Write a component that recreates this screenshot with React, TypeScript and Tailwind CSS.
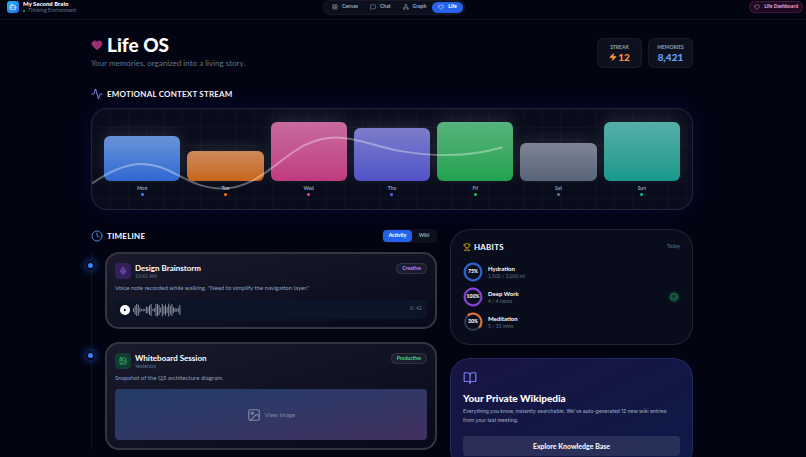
import React from 'react';
import {
  Activity, BookOpen, Bot, Clock, Heart, Image as ImageIcon, LayoutGrid, MessageSquare, Mic, Network, Smile, Trophy, Zap,
} from 'lucide-react';

const NAV = [
  { label: 'Canvas', icon: LayoutGrid },
  { label: 'Chat', icon: MessageSquare },
  { label: 'Graph', icon: Network },
  { label: 'Life', icon: Heart, active: true },
];

const DAYS = [
  { day: 'Mon', height: 'h-[45px]', bar: 'from-[#6a93d8] to-[#3068d2]', dot: 'bg-[#3b82f6]' },
  { day: 'Tue', height: 'h-[30px]', bar: 'from-[#cd8a58] to-[#c7641a]', dot: 'bg-[#f97316]' },
  { day: 'Wed', height: 'h-[59px]', bar: 'from-[#c66b9f] to-[#c03b80]', dot: 'bg-[#ec4899]' },
  { day: 'Thu', height: 'h-[53px]', bar: 'from-[#7c7dca] to-[#5152c8]', dot: 'bg-[#6366f1]' },
  { day: 'Fri', height: 'h-[59px]', bar: 'from-[#56b37c] to-[#20a24f]', dot: 'bg-[#22c55e]' },
  { day: 'Sat', height: 'h-[38px]', bar: 'from-[#7e8494] to-[#576478]', dot: 'bg-[#64748b]' },
  { day: 'Sun', height: 'h-[59px]', bar: 'from-[#54aea6] to-[#14998c]', dot: 'bg-[#14b8a6]' },
];

const HABITS = [
  { name: 'Hydration', detail: '1,500 / 2,000 ml', percent: 75, arc: 100, color: '#2b63d9' },
  { name: 'Deep Work', detail: '4 / 4 hours', percent: 100, arc: 100, color: '#8b3fdc', done: true },
  { name: 'Meditation', detail: '5 / 15 mins', percent: 30, arc: 48, color: '#e8742a' },
];

const WAVE = [4, 9, 12, 11, 5, 2, 3, 2, 7, 6, 10, 12, 2, 4, 12, 13, 10, 5, 13, 8, 11, 6, 13, 9, 12, 6, 4, 3, 5, 10];

const Header: React.FC = () => (
  <header className="flex h-5 shrink-0 items-center border-b border-white/5 pb-[5px] pl-[7px] pr-[3px]">
    <div className="flex flex-1 items-center gap-1">
      <div className="flex size-3 items-center justify-center rounded-[3px] bg-gradient-to-br from-[#22b8ee] to-[#2563eb] text-white">
        <Bot className="size-2" />
      </div>
      <div>
        <p className="text-[6px] font-black leading-[7px]">My Second Brain</p>
        <p className="flex items-center gap-[3px] text-[5px] leading-[7px] text-slate-500">
          <span className="size-0.5 rounded-full bg-green-500" />
          Thinking Environment
        </p>
      </div>
    </div>

    <nav className="flex h-[15px] w-[142px] items-center justify-between rounded-full border border-white/5 bg-[#0c0f1c] px-0.5">
      {NAV.map(({ label, icon: Icon, active }) => (
        <button
          key={label}
          type="button"
          className={
            active
              ? 'flex h-[11px] items-center gap-1 rounded-full bg-[#2563eb] px-1.5 text-[5px] font-black text-white'
              : 'flex h-[11px] items-center gap-1 rounded-full px-1.5 text-[5px] font-black text-slate-400'
          }
        >
          <Icon className="size-1.5" />
          {label}
        </button>
      ))}
    </nav>

    <div className="flex flex-1 justify-end pl-[22px]">
      <button type="button" className="flex h-3 items-center gap-1 rounded-full border border-[#ec4899]/20 bg-[#1f0a22] px-1 text-[5px] font-black text-[#e29ac0]">
        <Heart className="size-1.5" />
        Life Dashboard
      </button>
    </div>
  </header>
);

const Stat: React.FC<{ label: string; children: React.ReactNode }> = ({ label, children }) => (
  <div className="flex h-[30px] w-[45px] flex-col items-center justify-center gap-px rounded-md border border-white/5 bg-[#0d101d]">
    <p className="text-[5px] font-bold leading-[6px] text-slate-400">{label}</p>
    {children}
  </div>
);

const Stream: React.FC = () => (
  <section className="mt-5">
    <h2 className="flex h-3 items-center gap-1 text-[8px] font-bold uppercase tracking-wide">
      <Activity className="size-3 text-[#818cf8]" />
      Emotional Context Stream
    </h2>
    <div className="relative mt-2 flex h-[102px] items-end gap-[7px] overflow-hidden rounded-[16px] border border-white/10 bg-[#080c1b] bg-[linear-gradient(to_right,rgba(255,255,255,0.025)_1px,transparent_1px),linear-gradient(to_bottom,rgba(255,255,255,0.025)_1px,transparent_1px)] bg-[size:18px_18px] px-3 pb-[13px] shadow-[0_0_26px_rgba(20,24,110,0.35)]">
      {DAYS.map(({ day, height, bar, dot }) => (
        <div key={day} className="flex flex-1 flex-col items-center">
          <div className={`w-full rounded-md bg-gradient-to-b shadow-[0_-5px_16px_rgba(255,255,255,0.1)] ${height} ${bar}`} />
          <p className="mt-1 text-[5px] font-bold leading-[6px] text-slate-400">{day}</p>
          <span className={`mt-0.5 size-[3px] rounded-full ${dot}`} />
        </div>
      ))}
      <svg className="pointer-events-none absolute inset-0 size-full" viewBox="0 0 602 102" preserveAspectRatio="none" fill="none">
        <path
          d="M0 76C18 63 34 56 50 56C80 56 95 81 130 81C178 81 196 29 245 29C275 29 295 47 356 47C376 47 395 44 412 39"
          stroke="white"
          strokeOpacity="0.35"
          strokeWidth="2"
        />
      </svg>
    </div>
  </section>
);

type EntryProps = {
  title: string;
  time: string;
  text: string;
  tag: string;
  tagColor: string;
  icon: React.ReactNode;
  children: React.ReactNode;
};

const Entry: React.FC<EntryProps> = ({ title, time, text, tag, tagColor, icon, children }) => (
  <article className="relative rounded-[14px] border-2 border-[#343541] bg-gradient-to-br from-[#1a1a2b] to-[#080a1a] px-2 pb-2 pt-[9px]">
    <span className="absolute -left-[21px] top-[7px] size-[9px] rounded-full border-2 border-[#050b20] bg-[#3b82f6] shadow-[0_0_6px_2px_rgba(37,99,235,0.45)]" />
    <div className="flex items-start justify-between">
      <div className="flex items-center gap-1">
        {icon}
        <div>
          <h3 className="text-[8px] font-bold leading-[10px]">{title}</h3>
          <p className="text-[5px] leading-[6px] text-slate-500">{time}</p>
        </div>
      </div>
      <span className={`rounded-full border border-white/10 bg-white/5 px-[5px] text-[5px] font-bold leading-[9px] ${tagColor}`}>{tag}</span>
    </div>
    <p className="mt-[5px] text-[6px] leading-2 text-slate-400">{text}</p>
    {children}
  </article>
);

const Timeline: React.FC = () => (
  <section>
    <div className="flex h-[14px] items-center justify-between">
      <h2 className="flex items-center gap-1 text-[8px] font-bold uppercase tracking-wide">
        <Clock className="size-3 text-[#4f86d8]" />
        Timeline
      </h2>
      <div className="flex rounded-sm bg-[#0d101d] p-px">
        <button type="button" className="h-3 w-[29px] rounded-sm bg-[#2563eb] text-[5px] font-black">Activity</button>
        <button type="button" className="h-3 w-6 text-[5px] font-black text-slate-400">Wiki</button>
      </div>
    </div>

    <div className="mt-[9px] flex flex-col gap-[13px] border-l border-white/5 pl-[13px]">
      <Entry
        title="Design Brainstorm"
        time="10:42 AM"
        text={'Voice note recorded while walking. "Need to simplify the navigation layer."'}
        tag="Creative"
        tagColor="text-[#c084fc]"
        icon={
          <div className="flex size-4 items-center justify-center rounded bg-[#33205a] text-[#a868e8]">
            <Mic className="size-2" />
          </div>
        }
      >
        <div className="mt-2 flex h-[19px] items-center gap-[3px] rounded bg-[#0c1527] px-[5px]">
          <button type="button" aria-label="Play" className="flex size-[10px] items-center justify-center rounded-full bg-white">
            <svg className="size-1" viewBox="0 0 4 4"><path d="M1 .4L3.4 2L1 3.6Z" fill="#0c1527" /></svg>
          </button>
          <svg className="h-[14px] w-12" viewBox="0 0 48 14">
            {WAVE.map((h, i) => (
              <rect key={i} x={i * 1.6} y={7 - h / 2} width="1" height={h} rx="0.5" fill="#8b909e" />
            ))}
          </svg>
          <span className="ml-auto font-['Liberation_Mono',monospace] text-[5px] text-slate-500">0:42</span>
        </div>
      </Entry>

      <Entry
        title="Whiteboard Session"
        time="Yesterday"
        text="Snapshot of the Q3 architecture diagram."
        tag="Productive"
        tagColor="text-[#4ade80]"
        icon={
          <div className="flex size-4 items-center justify-center rounded bg-[#123d33] text-[#3fcf78]">
            <ImageIcon className="size-2" />
          </div>
        }
      >
        <button type="button" className="mt-[7px] flex h-[51px] w-full items-center justify-center gap-1 rounded bg-gradient-to-br from-[#233b67] via-[#303866] to-[#412f5f] text-[6px] text-[#7f88a3]">
          <ImageIcon className="size-[14px]" />
          View Image
        </button>
      </Entry>
    </div>
  </section>
);

const Habits: React.FC = () => (
  <section className="rounded-[20px] border border-white/10 bg-[#080c1b] p-3">
    <div className="flex h-[10px] items-center justify-between">
      <h2 className="flex items-center gap-[3px] text-[8px] font-bold uppercase tracking-wide">
        <Trophy className="size-2 text-[#d9b310]" />
        Habits
      </h2>
      <span className="text-[5px] text-slate-500">Today</span>
    </div>
    <ul className="mt-[10px] flex flex-col gap-[5px]">
      {HABITS.map(({ name, detail, percent, arc, color, done }) => (
        <li key={name} className="flex h-5 items-center gap-[5px]">
          <div className="relative flex size-5 items-center justify-center">
            <svg className="absolute inset-0 size-full" viewBox="0 0 20 20" fill="none">
              <circle cx="10" cy="10" r="8" stroke="#303b50" strokeWidth="2" />
              <circle cx="10" cy="10" r="8.5" stroke={color} strokeWidth="2" pathLength="100" strokeDasharray={`${arc} 100`} transform="rotate(-130 10 10)" />
            </svg>
            <span className="relative text-[5px] font-black">{percent}%</span>
          </div>
          <div>
            <h3 className="text-[6px] font-bold leading-2">{name}</h3>
            <p className="text-[5px] leading-[6px] text-slate-500">{detail}</p>
          </div>
          {done && (
            <span className="ml-auto flex size-3 items-center justify-center rounded-full bg-[#22c55e]/15 text-[#34b878]">
              <Smile className="size-2" />
            </span>
          )}
        </li>
      ))}
    </ul>
  </section>
);

const Wikipedia: React.FC = () => (
  <section className="rounded-[20px] border border-[#818cf8]/15 bg-gradient-to-br from-[#181442] to-[#0c1a48] p-3">
    <BookOpen className="size-[14px] text-[#7c80ea]" />
    <h2 className="mt-1.5 text-[10px] font-black leading-[14px]">Your Private Wikipedia</h2>
    <p className="mt-0.5 font-['Inter',sans-serif] text-[5px] font-medium leading-[9px] text-slate-400">
      Everything you know, instantly searchable. We've auto-generated 12 new wiki entries from&nbsp;your last meeting.
    </p>
    <button type="button" className="mt-[11px] h-5 w-full rounded bg-white/10 text-[7px] font-bold">Explore Knowledge Base</button>
  </section>
);

export default function App() {
  return (
    <div className="flex h-screen flex-col overflow-hidden bg-[#020411] font-['Lato',sans-serif] text-white">
      <Header />
      <main className="pr-[22px] pt-[14px]">
        <div className="mx-auto max-w-[602px]">
          <div className="flex items-end justify-between">
            <div>
              <h1 className="flex items-center gap-1 text-[19px] font-black leading-[22px]">
                <Heart className="size-3 fill-current text-[#9d3070]" />
                Life OS
              </h1>
              <p className="mt-0.5 text-[8px] leading-[10px] text-slate-500">Your memories, organized into a living story.</p>
            </div>
            <div className="flex gap-1.5">
              <Stat label="STREAK">
                <p className="flex items-center gap-px text-[10px] font-black leading-3 text-[#fb923c]">
                  <Zap className="size-2 fill-current" />
                  12
                </p>
              </Stat>
              <Stat label="MEMORIES">
                <p className="text-[10px] font-black leading-3 text-[#60a5fa]">8,421</p>
              </Stat>
            </div>
          </div>

          <Stream />

          <div className="mt-[19px] grid grid-cols-[346fr_243fr] gap-[13px]">
            <Timeline />
            <div className="flex flex-col gap-[13px]">
              <Habits />
              <Wikipedia />
            </div>
          </div>
        </div>
      </main>
    </div>
  );
}
